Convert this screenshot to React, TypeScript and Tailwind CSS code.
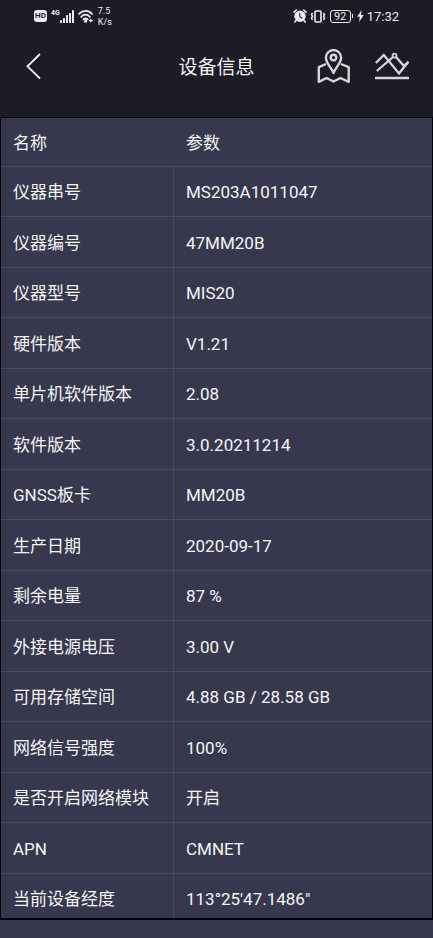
const rows: [string, string][] = [
  ["仪器串号", "MS203A1011047"],
  ["仪器编号", "47MM20B"],
  ["仪器型号", "MIS20"],
  ["硬件版本", "V1.21"],
  ["单片机软件版本", "2.08"],
  ["软件版本", "3.0.20211214"],
  ["GNSS板卡", "MM20B"],
  ["生产日期", "2020-09-17"],
  ["剩余电量", "87 %"],
  ["外接电源电压", "3.00 V"],
  ["可用存储空间", "4.88 GB / 28.58 GB"],
  ["网络信号强度", "100%"],
  ["是否开启网络模块", "开启"],
  ["APN", "CMNET"],
  ["当前设备经度", "113°25'47.1486\""],
];

function SignalIcon() {
  return (
    <svg width="14" height="13" viewBox="0 0 14 13" fill="currentColor" aria-hidden="true">
      <rect x="0" y="10" width="2" height="3" rx="0.6" />
      <rect x="3" y="8" width="2" height="5" rx="0.6" />
      <rect x="6" y="5" width="2" height="8" rx="0.6" />
      <rect x="9" y="3" width="2" height="10" rx="0.6" />
      <rect x="12" y="0" width="2" height="13" rx="0.6" />
    </svg>
  );
}

function WifiIcon() {
  return (
    <svg width="16" height="14" viewBox="0 0 16 14" fill="none" stroke="currentColor" strokeWidth="1.8" strokeLinecap="round" aria-hidden="true">
      <path d="M1 4.800C5 0.800 10.500 0.800 14 4.800" />
      <path d="M3.200 7.800C6 4.900 9.200 4.900 11.900 7.800" />
      <path d="M5.500 10.300C6.900 9.200 8.300 9.200 9.600 10.300" />
      <circle cx="7.600" cy="12.200" r="0.700" fill="currentColor" />
      <path d="M11.400 11.600h3.200M12.800 10.400v2.400" strokeWidth="1.200" />
    </svg>
  );
}

function AlarmIcon() {
  return (
    <svg width="14" height="14" viewBox="0 0 14 14" aria-hidden="true">
      <path d="M1 3.200L3.400 1M13 3.200L10.600 1M3 11.500L1.800 13M11 11.500L12.200 13" stroke="#ededf0" strokeWidth="1.600" strokeLinecap="round" />
      <circle cx="7" cy="7.300" r="5.700" fill="#ededf0" />
      <path d="M6.800 4.200V7.600L9.300 9.200" fill="none" stroke="#1d1c26" strokeWidth="1.100" />
    </svg>
  );
}

function VibrateIcon() {
  return (
    <svg width="16" height="13" viewBox="0 0 16 13" fill="none" stroke="currentColor" aria-hidden="true">
      <rect x="5" y="1" width="6" height="11" rx="1" strokeWidth="1.600" />
      <path d="M2.500 2.800l-1 1.800 1 1.800-1 1.800 1 1.800M13.500 2.800l1 1.800-1 1.800 1 1.800-1 1.800" strokeWidth="1.500" />
    </svg>
  );
}

function StatusBar() {
  return (
    <div className="flex h-8 items-center justify-between px-[34px] text-[#ededf0]">
      <div className="flex items-center">
        <span className="h-3 w-[13px] rounded-[3px] bg-[#ededf0] text-center text-[8px] leading-3 font-bold text-[#1d1c26]">HD</span>
        <span className="ml-1 h-[14px] text-[7px] leading-[9px] font-bold">4G</span>
        <SignalIcon />
        <span className="ml-1"><WifiIcon /></span>
        <span className="ml-1 pt-px text-[9px] leading-[11px]">7.5<br />K/s</span>
      </div>
      <div className="flex items-center">
        <AlarmIcon />
        <span className="ml-[3px]"><VibrateIcon /></span>
        <span className="ml-1 h-[13px] w-[21px] rounded-[3px] border border-current text-center text-[11px] leading-[11px]">92</span>
        <span className="ml-px h-1 w-px bg-current" />
        <svg className="ml-1" width="7" height="12" viewBox="0 0 7 12" fill="currentColor" aria-hidden="true">
          <path d="M4.600 0L0.300 6.800H2.800L2.200 12L6.700 4.900H4Z" />
        </svg>
        <span className="ml-[3px] pt-px text-[13px] leading-4">17:32</span>
      </div>
    </div>
  );
}

function MapIcon() {
  return (
    <svg width="34" height="36" viewBox="0 0 34 36" fill="none" stroke="#d6d6da" strokeWidth="2.400" strokeLinejoin="round" aria-hidden="true">
      <path d="M16.500 25C14.500 19.500 8.900 15.500 8.900 9.600A7.600 7.600 0 0 1 24.100 9.600C24.100 15.500 18.500 19.500 16.500 25Z" />
      <circle cx="16.500" cy="9.600" r="2.800" />
      <path d="M9 16L1.800 19.200V33.800L9.500 30L16.500 33.500L23.500 30L31.700 33.800V19.200L24 16" />
    </svg>
  );
}

function ChartIcon() {
  return (
    <svg width="34" height="28" viewBox="0 0 34 28" fill="none" stroke="#d6d6da" strokeWidth="2.300" aria-hidden="true">
      <path d="M0.800 11L8.800 3L24 21.500L33.500 9.500" />
      <path d="M1.800 19L18 5M21 5L28.500 13.500L33 11" />
      <circle cx="19.500" cy="3.600" r="2" strokeWidth="1.700" />
      <path d="M0 26H34" />
    </svg>
  );
}

function TitleBar() {
  return (
    <header className="grid h-[85px] grid-cols-[1fr_auto_1fr] items-start px-6">
      <button type="button" aria-label="返回" className="mt-5 flex h-7 w-6 items-center">
        <svg width="18" height="28" viewBox="0 0 18 28" fill="none" stroke="#f4f4f6" strokeWidth="1.800" aria-hidden="true">
          <path d="M16 2L3.500 14.300L16 26.500" />
        </svg>
      </button>
      <h1 className="mt-[22px] text-[19px] leading-7">设备信息</h1>
      <div className="mt-4 flex items-center justify-end gap-6">
        <button type="button" aria-label="地图"><MapIcon /></button>
        <button type="button" aria-label="图表"><ChartIcon /></button>
      </div>
    </header>
  );
}

export default function App() {
  return (
    <div className="flex h-screen flex-col bg-[#37384d] font-[Roboto,'Noto_Sans_CJK_SC',sans-serif] text-[#f5f5f7]">
      <div className="bg-[#1d1c26]">
        <StatusBar />
        <TitleBar />
      </div>
      <main className="mb-[18px] min-h-0 flex-1 overflow-hidden border border-b-2 border-black">
        <table className="w-full table-fixed border-separate border-spacing-0 text-left text-[17px] leading-6">
          <thead>
            <tr className="h-[49px]">
              <th scope="col" className="w-[173px] border-b border-[#4b4b52] pt-0.5 pl-3 font-normal">名称</th>
              <th scope="col" className="border-b border-[#4b4b52] pt-0.5 pl-3 font-normal">参数</th>
            </tr>
          </thead>
          <tbody>
            {rows.map(([name, value]) => (
              <tr key={name} className="odd:h-[50px] even:h-[51px]">
                <th scope="row" className="border-r border-b border-[#4b4b52] pt-px pl-3 font-normal">{name}</th>
                <td className="border-b border-[#4b4b52] pt-px pl-3">{value}</td>
              </tr>
            ))}
          </tbody>
        </table>
      </main>
    </div>
  );
}
